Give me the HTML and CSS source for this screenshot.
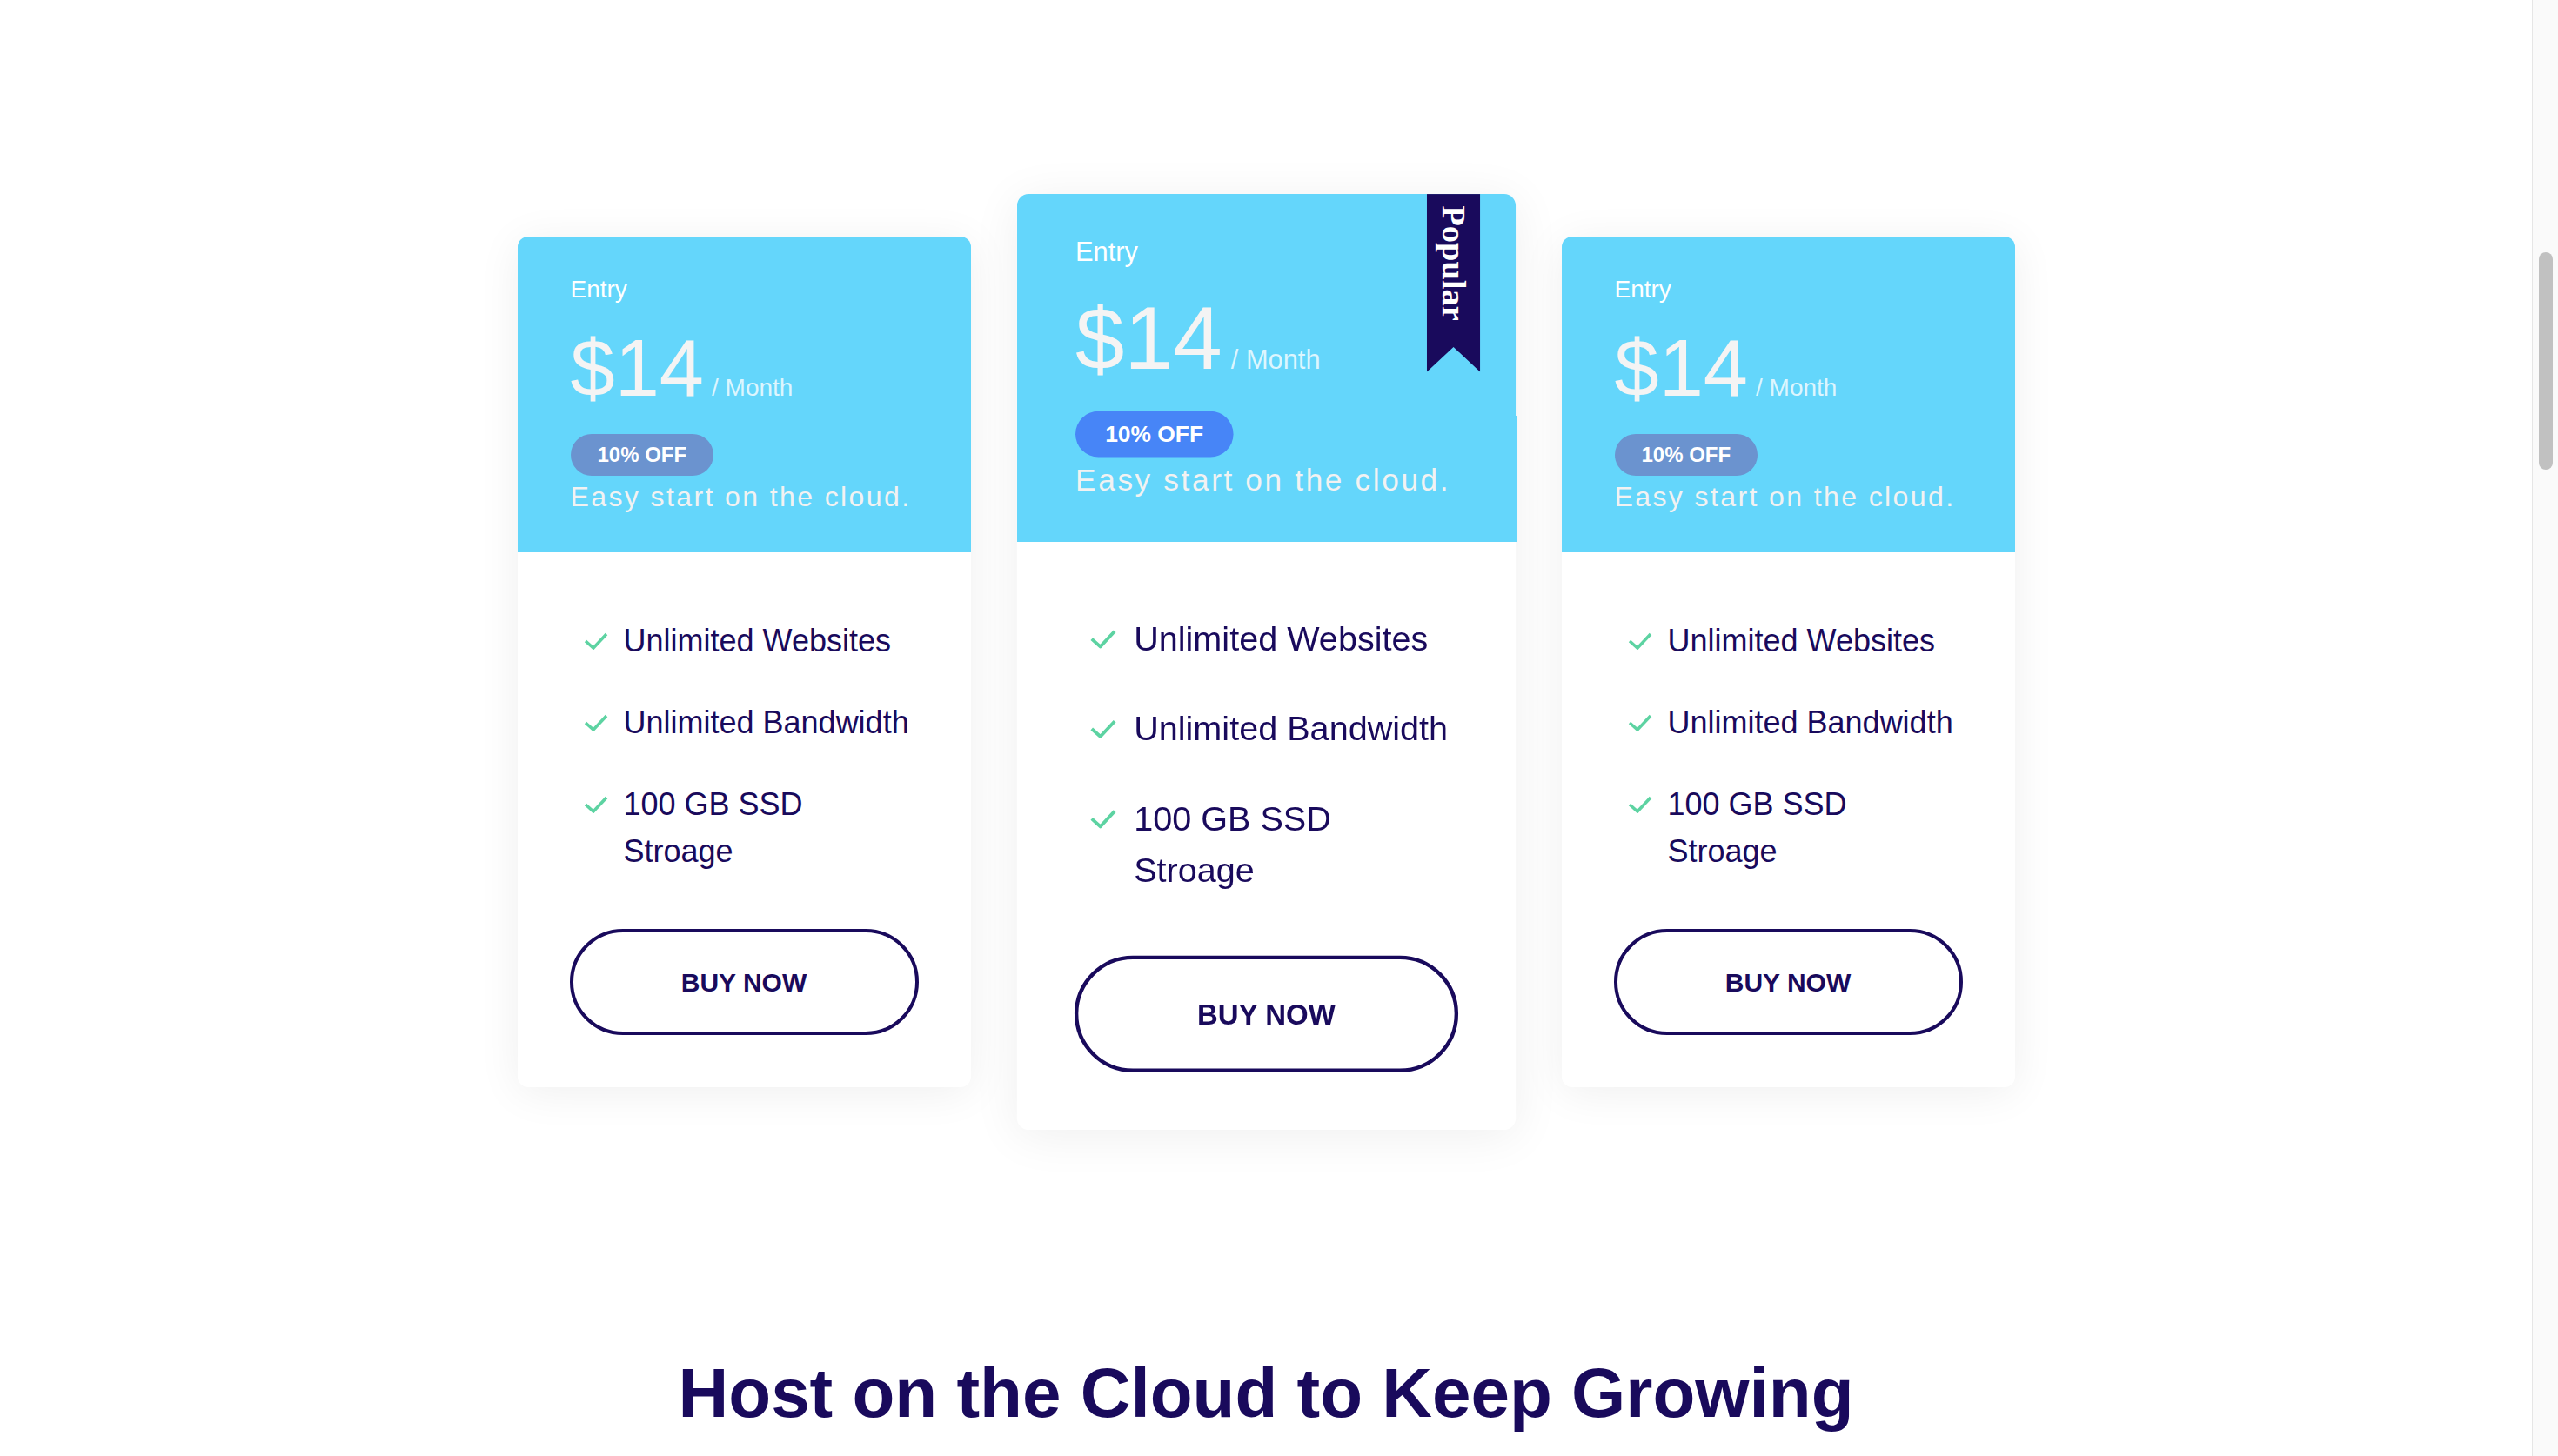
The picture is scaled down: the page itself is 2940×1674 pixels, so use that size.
FILE: index.html
```html
<!DOCTYPE html>
<html lang="en">
<head>
<meta charset="utf-8">
<title>Pricing</title>
<link rel="stylesheet" href="styles.css">
</head>
<body>
<main class="page">
  <section class="pricing">
    <article class="card">
      <header class="card-head">
        <div class="tier">Entry</div>
        <div class="price-row"><span class="price">$14</span><span class="per">/ Month</span></div>
        <div class="badge-row"><span class="badge">10% OFF</span></div>
        <p class="desc">Easy start on the cloud.</p>
      </header>
      <div class="card-body">
        <ul class="features">
          <li><svg class="check" viewBox="0 0 28 20"><polyline points="2,10 11,18 26,2"/></svg><span>Unlimited Websites</span></li>
          <li><svg class="check" viewBox="0 0 28 20"><polyline points="2,10 11,18 26,2"/></svg><span>Unlimited Bandwidth</span></li>
          <li><svg class="check" viewBox="0 0 28 20"><polyline points="2,10 11,18 26,2"/></svg><span>100 GB SSD Stroage</span></li>
        </ul>
        <button class="buy">BUY NOW</button>
      </div>
    </article>

    <article class="card card--featured">
      <header class="card-head">
        <div class="ribbon"><span>Popular</span></div>
        <div class="tier">Entry</div>
        <div class="price-row"><span class="price">$14</span><span class="per">/ Month</span></div>
        <div class="badge-row"><span class="badge badge--bright">10% OFF</span></div>
        <p class="desc">Easy start on the cloud.</p>
      </header>
      <div class="card-body">
        <ul class="features">
          <li><svg class="check" viewBox="0 0 28 20"><polyline points="2,10 11,18 26,2"/></svg><span>Unlimited Websites</span></li>
          <li><svg class="check" viewBox="0 0 28 20"><polyline points="2,10 11,18 26,2"/></svg><span>Unlimited Bandwidth</span></li>
          <li><svg class="check" viewBox="0 0 28 20"><polyline points="2,10 11,18 26,2"/></svg><span>100 GB SSD Stroage</span></li>
        </ul>
        <button class="buy">BUY NOW</button>
      </div>
    </article>

    <article class="card">
      <header class="card-head">
        <div class="tier">Entry</div>
        <div class="price-row"><span class="price">$14</span><span class="per">/ Month</span></div>
        <div class="badge-row"><span class="badge">10% OFF</span></div>
        <p class="desc">Easy start on the cloud.</p>
      </header>
      <div class="card-body">
        <ul class="features">
          <li><svg class="check" viewBox="0 0 28 20"><polyline points="2,10 11,18 26,2"/></svg><span>Unlimited Websites</span></li>
          <li><svg class="check" viewBox="0 0 28 20"><polyline points="2,10 11,18 26,2"/></svg><span>Unlimited Bandwidth</span></li>
          <li><svg class="check" viewBox="0 0 28 20"><polyline points="2,10 11,18 26,2"/></svg><span>100 GB SSD Stroage</span></li>
        </ul>
        <button class="buy">BUY NOW</button>
      </div>
    </article>
  </section>

  <h2 class="headline">Host on the Cloud to Keep Growing</h2>
</main>
<div class="scrollbar"><div class="scrollbar-thumb"></div></div>
</body>
</html>
```

FILE: styles.css
```css
html, body {
  margin: 0;
  padding: 0;
  height: 100%;
  overflow: hidden;
  background: #ffffff;
}

body {
  font-family: "Liberation Sans", Arial, Helvetica, sans-serif;
  color: #190a5c;
}

.page {
  box-sizing: border-box;
  width: calc(100% - 30px);
  padding-top: 272px;
}

.pricing {
  display: flex;
  justify-content: center;
  align-items: flex-start;
  gap: 79px;
}

.card {
  width: 521px;
  background: #ffffff;
  border-radius: 12px;
  overflow: hidden;
  box-shadow: 0 6px 50px rgba(0, 0, 0, 0.065);
}

.card--featured {
  transform: scale(1.1);
}

.card-head {
  position: relative;
  background: #64d6fb;
  padding: 40px 60px 40px 61px;
  color: #ffffff;
}

.tier {
  font-size: 28px;
  line-height: 42px;
}

.price-row {
  display: flex;
  align-items: baseline;
  margin-top: 21px;
  height: 95px;
}

.price {
  font-size: 92px;
  line-height: 96px;
  color: #f4f4f4;
}

.per {
  font-size: 28px;
  margin-left: 9px;
  color: rgba(255, 255, 255, 0.78);
}

.badge-row {
  margin-top: 29px;
  height: 48px;
}

.badge {
  display: inline-block;
  height: 48px;
  line-height: 48px;
  padding: 0 31px;
  border-radius: 24px;
  background: #6b93cf;
  color: #ffffff;
  font-size: 24px;
  font-weight: 700;
}

.badge--bright {
  background: #4785f7;
}

.desc {
  margin: 0;
  font-size: 32px;
  line-height: 48px;
  letter-spacing: 2.4px;
  color: #f2f2f2;
}

.ribbon {
  position: absolute;
  top: 0;
  right: 37px;
  width: 56px;
  height: 186px;
  background: #190a5c;
  clip-path: polygon(0 0, 100% 0, 100% 100%, 50% 86%, 0 100%);
  display: flex;
  justify-content: center;
}

.ribbon span {
  writing-mode: vertical-rl;
  font-family: "Liberation Serif", "Times New Roman", serif;
  font-weight: 700;
  font-size: 35px;
  line-height: 56px;
  color: #ffffff;
  padding-top: 12px;
}

.card-body {
  padding: 75px 60px 60px;
}

.features {
  list-style: none;
  margin: 0 0 62px;
  padding: 0 0 0 16px;
}

.features li {
  display: flex;
  align-items: flex-start;
  gap: 18px;
  font-size: 36px;
  line-height: 54px;
  margin-bottom: 40px;
}

.features li:last-child {
  margin-bottom: 0;
}

.check {
  flex: none;
  width: 28px;
  height: 20px;
  margin-top: 17px;
}

.check polyline {
  fill: none;
  stroke: #5dd3a2;
  stroke-width: 3.5;
}

.buy {
  display: block;
  box-sizing: border-box;
  width: 100%;
  height: 122px;
  border: 4px solid #190a5c;
  border-radius: 61px;
  background: #ffffff;
  color: #190a5c;
  font-family: "Liberation Sans", Arial, Helvetica, sans-serif;
  font-size: 30px;
  font-weight: 700;
  padding-top: 2px;
  cursor: pointer;
}

.headline {
  margin: 304px 0 0;
  text-align: center;
  font-size: 80px;
  line-height: 96px;
  font-weight: 700;
  color: #190a5c;
}

.scrollbar {
  position: fixed;
  top: 0;
  right: 0;
  width: 29px;
  height: 100%;
  background: #fafafa;
  border-left: 1px solid #e6e6e6;
}

.scrollbar-thumb {
  position: absolute;
  top: 290px;
  left: 7px;
  width: 16px;
  height: 250px;
  border-radius: 8px;
  background: #c1c1c1;
}
```
